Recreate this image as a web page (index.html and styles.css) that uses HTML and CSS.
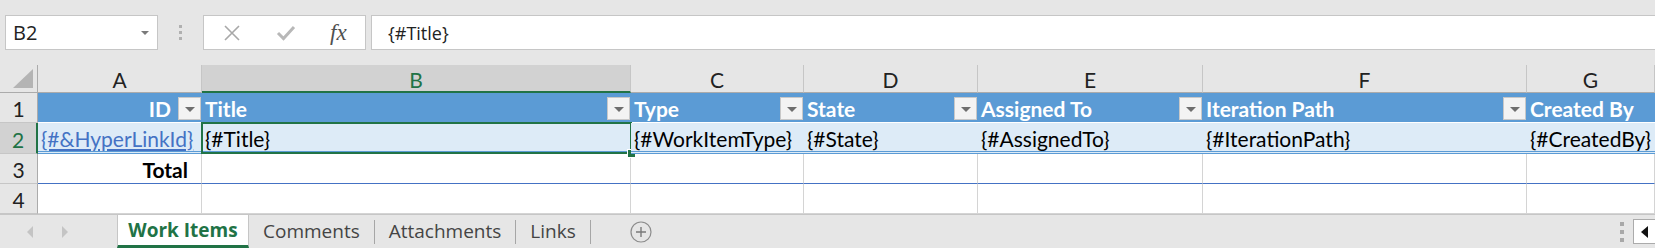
FILE: index.html
```html
<!DOCTYPE html>
<html>

<head>
    <title>Work Items</title>
    <link rel="stylesheet" href="styles.css">
</head>

<body>
    <!-- Formula bar -->
    <div class="formula-bar">
        <div class="name-box">
            <span>B2</span>
            <span class="name-arrow"></span>
        </div>
        <div class="grip"><i></i><i></i><i></i></div>
        <div class="fx-buttons">
            <svg class="icon-cancel" width="18" height="18" viewBox="0 0 18 18">
                <path d="M2 2 L16 16 M16 2 L2 16" stroke="#a8a8a8" stroke-width="1.6" fill="none"/>
            </svg>
            <svg class="icon-enter" width="20" height="18" viewBox="0 0 20 18">
                <path d="M2 9 L7.5 14.5 L18 3" stroke="#b8b8b8" stroke-width="3" fill="none"/>
            </svg>
            <span class="fx">fx</span>
        </div>
        <div class="formula-input">{#Title}</div>
    </div>

    <!-- Sheet -->
    <div class="sheet">
        <!-- Column headers -->
        <div class="corner"><span class="select-all"></span></div>
        <div class="col-head">A</div>
        <div class="col-head selected">B</div>
        <div class="col-head">C</div>
        <div class="col-head">D</div>
        <div class="col-head">E</div>
        <div class="col-head">F</div>
        <div class="col-head">G</div>

        <!-- Row 1: table header -->
        <div class="row-head">1</div>
        <div class="cell th align-right">ID<span class="filter"></span></div>
        <div class="cell th">Title<span class="filter"></span></div>
        <div class="cell th">Type<span class="filter"></span></div>
        <div class="cell th">State<span class="filter"></span></div>
        <div class="cell th">Assigned To<span class="filter"></span></div>
        <div class="cell th">Iteration Path<span class="filter"></span></div>
        <div class="cell th">Created By</div>

        <!-- Row 2: template row -->
        <div class="row-head selected">2</div>
        <div class="cell td"><a class="link">{#&amp;HyperLinkId}</a></div>
        <div class="cell td active">{#Title}<span class="selection"><span class="fill-handle"></span></span></div>
        <div class="cell td">{#WorkItemType}</div>
        <div class="cell td">{#State}</div>
        <div class="cell td">{#AssignedTo}</div>
        <div class="cell td">{#IterationPath}</div>
        <div class="cell td">{#CreatedBy}</div>

        <!-- Row 3: total row -->
        <div class="row-head">3</div>
        <div class="cell total align-right"><b>Total</b></div>
        <div class="cell total"></div>
        <div class="cell total"></div>
        <div class="cell total"></div>
        <div class="cell total"></div>
        <div class="cell total"></div>
        <div class="cell total"></div>

        <!-- Row 4 -->
        <div class="row-head">4</div>
        <div class="cell"></div>
        <div class="cell"></div>
        <div class="cell"></div>
        <div class="cell"></div>
        <div class="cell"></div>
        <div class="cell"></div>
        <div class="cell"></div>
    </div>

    <!-- Sheet tabs -->
    <div class="tab-bar">
        <div class="tab-nav">
            <span class="nav-left"></span>
            <span class="nav-right"></span>
        </div>
        <div class="tab active">Work Items</div>
        <div class="tab">Comments</div>
        <span class="tab-sep"></span>
        <div class="tab">Attachments</div>
        <span class="tab-sep"></span>
        <div class="tab">Links</div>
        <span class="tab-sep"></span>
        <div class="new-sheet">
            <svg width="22" height="22" viewBox="0 0 22 22">
                <circle cx="11" cy="11" r="10" stroke="#8c8c8c" stroke-width="1.2" fill="none"/>
                <path d="M11 6 V16 M6 11 H16" stroke="#7a7a7a" stroke-width="1.4"/>
            </svg>
        </div>
        <div class="tab-right">
            <div class="grip"><i></i><i></i><i></i></div>
            <div class="scroll-left"><span></span></div>
        </div>
    </div>
</body>

</html>
```

FILE: styles.css
```css
/* Page */
body {
    margin: 0;
    width: 1655px;
    height: 248px;
    overflow: hidden;
    background-color: #e6e6e6;
    font-family: "Lato", "Liberation Sans", sans-serif;
}

/* Formula bar */
.formula-bar {
    display: flex;
    align-items: center;
    height: 65px;
    padding-left: 5px;
    box-sizing: border-box;
    font-family: "Open Sans", "Liberation Sans", sans-serif;
    font-size: 18px;
    color: #222;
}

.name-box {
    display: flex;
    align-items: center;
    justify-content: space-between;
    width: 153px;
    height: 35px;
    box-sizing: border-box;
    padding: 0 8px 0 7px;
    background: white;
    border: 1px solid #c6c6c6;
    font-size: 20px;
}

.name-arrow {
    width: 0;
    height: 0;
    border-left: 4px solid transparent;
    border-right: 4px solid transparent;
    border-top: 4px solid #7a7a7a;
}

.grip {
    display: flex;
    flex-direction: column;
    align-items: center;
    justify-content: center;
    gap: 3px;
    width: 45px;
}

.grip i {
    display: block;
    width: 3px;
    height: 3px;
    background: #b0b0b0;
}

.fx-buttons {
    position: relative;
    display: flex;
    align-items: center;
    width: 163px;
    height: 35px;
    box-sizing: border-box;
    background: white;
    border: 1px solid #c6c6c6;
}

.icon-cancel {
    margin-left: 19px;
}

.icon-enter {
    margin-left: 35px;
}

.fx {
    margin-left: 34px;
    font-family: "Liberation Serif", serif;
    font-style: italic;
    font-size: 23px;
    color: #505050;
}

.formula-input {
    flex: 1;
    display: flex;
    align-items: center;
    height: 35px;
    box-sizing: border-box;
    margin-left: 5px;
    padding-left: 16px;
    background: white;
    border: 1px solid #c6c6c6;
    border-right: none;
}

/* Sheet grid */
.sheet {
    display: grid;
    grid-template-columns: 38px 164px 429px 173px 174px 225px 324px 128px;
    grid-template-rows: 28px 30px 31px 30px 30px;
    background: white;
    font-size: 21px;
}

.corner {
    display: flex;
    justify-content: flex-end;
    align-items: flex-end;
    padding: 0 4px 4px 0;
    background: #e6e6e6;
    border-right: 1px solid #ababab;
    border-bottom: 1px solid #ababab;
}

.select-all {
    width: 0;
    height: 0;
    border-left: 20px solid transparent;
    border-bottom: 19px solid #b4b4b4;
}

.col-head {
    display: flex;
    align-items: center;
    justify-content: center;
    padding-top: 2px;
    box-sizing: border-box;
    background: #e6e6e6;
    color: #222;
    border-right: 1px solid #c6c6c6;
    border-bottom: 1px solid #ababab;
}

.col-head.selected {
    background: #d2d2d2;
    color: #217346;
    border-bottom: 2px solid #217346;
}

.row-head {
    display: flex;
    align-items: center;
    justify-content: center;
    padding-top: 2px;
    box-sizing: border-box;
    background: #e6e6e6;
    color: #222;
    border-right: 1px solid #ababab;
    border-bottom: 1px solid #c6c6c6;
}

.row-head.selected {
    background: #d2d2d2;
    color: #217346;
    border-right: 2px solid #217346;
}

/* Cells */
.cell {
    display: flex;
    align-items: center;
    padding: 2px 3px 0 3px;
    box-sizing: border-box;
    white-space: nowrap;
    color: #000;
    border-right: 1px solid #d4d4d4;
    border-bottom: 1px solid #d4d4d4;
}

.align-right {
    justify-content: flex-end;
}

.th {
    padding-right: 1px;
    padding-top: 1px;
    background: #5b9bd5;
    color: white;
    font-weight: bold;
    border-right: none;
    border-bottom: 1px solid #ffffff;
}

.filter {
    position: relative;
    width: 23px;
    height: 23px;
    margin-left: auto;
    box-sizing: border-box;
    background: #f3f3f3;
    border: 1px solid #c8c8c8;
}

.align-right .filter {
    margin-left: 7px;
}

.filter::after {
    content: "";
    position: absolute;
    left: 6px;
    top: 9px;
    border-left: 5px solid transparent;
    border-right: 5px solid transparent;
    border-top: 5px solid #6e6e6e;
}

.td {
    position: relative;
    background: #ddebf7;
    border-right: none;
    border-bottom: 3px double #5b9bd5;
}

.link {
    color: #4472c4;
    text-decoration: underline;
}

.total {
    padding-right: 13px;
    border-bottom: 1px solid #4472c4;
}

/* Active cell */
.selection {
    position: absolute;
    left: -1px;
    top: -1px;
    right: -1px;
    bottom: -3px;
    border: 2px solid #217346;
}

.fill-handle {
    position: absolute;
    right: -6px;
    bottom: -6px;
    width: 7px;
    height: 7px;
    background: #217346;
    border: 1px solid white;
}

/* Sheet tabs */
.tab-bar {
    display: flex;
    align-items: center;
    height: 34px;
    box-sizing: border-box;
    border-top: 1px solid #c6c6c6;
    font-family: "Open Sans", "Liberation Sans", sans-serif;
    font-size: 19px;
    color: #444;
}

.tab-nav {
    display: flex;
    align-items: center;
    width: 117px;
    padding-left: 27px;
    box-sizing: border-box;
    gap: 29px;
}

.nav-left {
    width: 0;
    height: 0;
    border-top: 6px solid transparent;
    border-bottom: 6px solid transparent;
    border-right: 6px solid #c4c4c4;
}

.nav-right {
    width: 0;
    height: 0;
    border-top: 6px solid transparent;
    border-bottom: 6px solid transparent;
    border-left: 6px solid #c4c4c4;
}

.tab {
    display: flex;
    align-items: center;
    height: 100%;
    padding: 0 14px 2px 14px;
    box-sizing: border-box;
}

.tab.active {
    width: 132px;
    justify-content: center;
    margin-top: -1px;
    height: 33px;
    background: white;
    color: #217346;
    font-weight: bold;
    border-left: 1px solid #c6c6c6;
    border-right: 1px solid #c6c6c6;
    border-bottom: 3px solid #217346;
    padding: 0;
}

.tab-sep {
    width: 1px;
    height: 24px;
    background: #a6a6a6;
}

.new-sheet {
    display: flex;
    align-items: center;
    margin-left: 39px;
}

.tab-right {
    display: flex;
    align-items: center;
    margin-left: auto;
    height: 100%;
}

.tab-right .grip {
    width: 22px;
    gap: 4px;
}

.tab-right .grip i {
    width: 4px;
    height: 4px;
    background: #a8a8a8;
}

.scroll-left {
    display: flex;
    align-items: center;
    justify-content: center;
    width: 22px;
    height: 25px;
    box-sizing: border-box;
    background: white;
    border: 1px solid #ababab;
    border-right: none;
}

.scroll-left span {
    width: 0;
    height: 0;
    border-top: 6px solid transparent;
    border-bottom: 6px solid transparent;
    border-right: 7px solid #111;
}
```
